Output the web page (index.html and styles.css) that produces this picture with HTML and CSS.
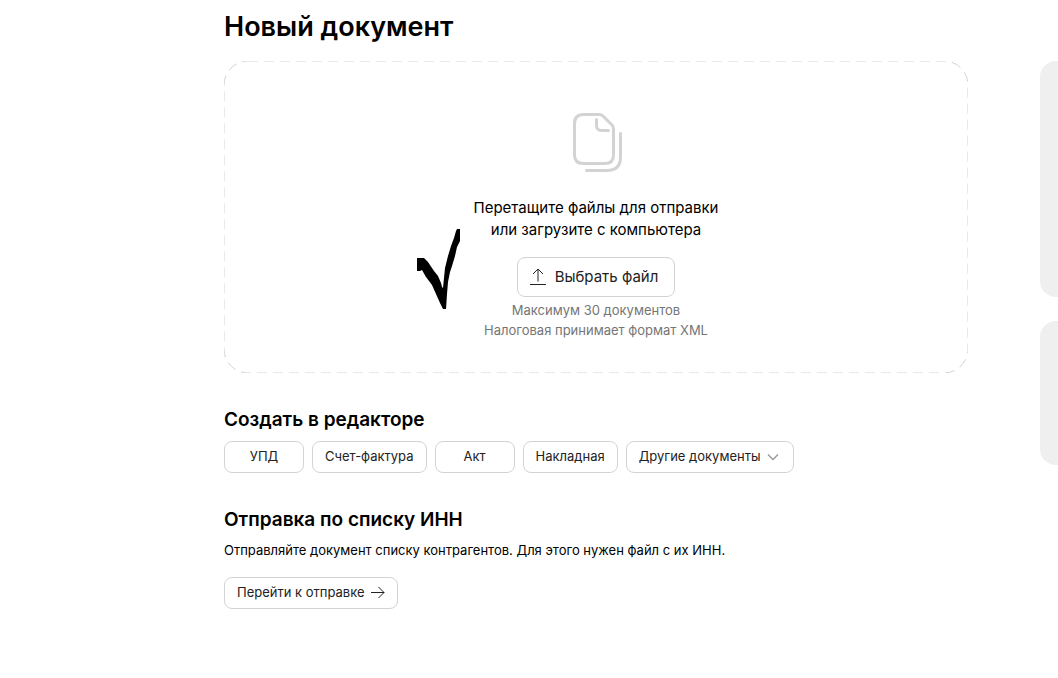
FILE: index.html
```html
<!DOCTYPE html>
<html lang="ru">
<head>
    <meta charset="UTF-8">
    <meta name="viewport" content="width=device-width, initial-scale=1.0">
    <title>Новый документ</title>
    <link rel="stylesheet" href="styles.css">
</head>
<body>

    <div class="page">
        <main class="content">
            <h1>Новый документ</h1>

            <!-- Drop area for files -->
            <section class="dropzone">
                <svg class="dropzone-border" aria-hidden="true">
                    <rect width="100%" height="100%" rx="24" />
                </svg>

                <svg class="files-icon" width="49" height="59" viewBox="0 0 49 59" aria-hidden="true">
                    <path d="M10.500 1.500H26Q28.500 1.500 30 3L39 12Q40.500 13.500 40.500 16V42Q40.500 50.500 32 50.500H10.500Q1.500 50.500 1.500 42V10.500Q1.500 1.500 10.500 1.500Z" />
                    <path d="M23.500 6.500V12.500Q23.500 17.500 28.500 17.500H35.500" />
                    <path d="M47.500 20.500V44Q47.500 57.500 34 57.500H13.500" />
                </svg>

                <p class="dropzone-text">Перетащите файлы для отправки<br>или загрузите с компьютера</p>

                <button type="button" class="btn btn-large">
                    <svg width="18" height="18" viewBox="0 0 18 18" aria-hidden="true">
                        <path d="M9 13.500V1.500M4 6L9 1L14 6M1 16.500H17" />
                    </svg>
                    Выбрать файл
                </button>

                <p class="hint">Максимум 30 документов<br>Налоговая принимает формат XML</p>

                <svg class="checkmark" width="44" height="80" viewBox="0 0 44 80" aria-hidden="true">
                    <path d="M0 29H7L11 33L17 42L21 47L24 54L25 58L26 59L27 49L28 39L31 27L34 17L37 9L39 2L40 0H43V12L40 18L38 27L35 37L33 43L31 53L30 65L29 80H26L23 74L19 65L15 56L9 48L5 41L3 42H0Z" />
                </svg>
            </section>

            <!-- Documents that can be made in the editor -->
            <section class="block">
                <h2>Создать в редакторе</h2>
                <div class="buttons">
                    <button type="button" class="btn">УПД</button>
                    <button type="button" class="btn">Счет-фактура</button>
                    <button type="button" class="btn">Акт</button>
                    <button type="button" class="btn">Накладная</button>
                    <div class="select">
                        <select class="btn" aria-label="Другие документы">
                            <option>Другие документы</option>
                        </select>
                        <svg width="12" height="8" viewBox="0 0 12 8" aria-hidden="true">
                            <path d="M1 1.500L6 6.500L11 1.500" />
                        </svg>
                    </div>
                </div>
            </section>

            <!-- Sending by a list of INN -->
            <section class="block">
                <h2>Отправка по списку ИНН</h2>
                <p class="description">Отправляйте документ списку контрагентов. Для этого нужен файл с их ИНН.</p>
                <a href="#" class="btn">
                    Перейти к отправке
                    <svg width="14" height="12" viewBox="0 0 14 12" aria-hidden="true">
                        <path d="M0 6.500H13M7.500 1L13 6.500L7.500 12" />
                    </svg>
                </a>
            </section>
        </main>

        <aside class="side">
            <div class="side-card side-card-tall"></div>
            <div class="side-card"></div>
        </aside>
    </div>

</body>
</html>
```

FILE: styles.css
```css
* {
    box-sizing: border-box;
}

body {
    font-family: Inter, "Liberation Sans", sans-serif;
    font-size: 13px;
    line-height: 20px;
    color: #000;
    background-color: #fff;
    margin: 0;
}

h1, h2, p {
    margin: 0;
}

.page {
    display: grid;
    grid-template-columns: minmax(0, 744px) minmax(18px, 1fr);
    column-gap: 72px;
    padding: 9px 0 40px 224px;
}

h1 {
    font-size: 27px;
    line-height: 36px;
    font-weight: 600;
    margin-bottom: 16px;
}

h2 {
    font-size: 19px;
    line-height: 30px;
    font-weight: 600;
    margin-bottom: 6px;
}

.dropzone {
    position: relative;
    display: flex;
    flex-direction: column;
    align-items: center;
    padding: 52px 24px 33px;
    text-align: center;
}

.dropzone-border {
    position: absolute;
    top: 0;
    left: 0;
    width: 100%;
    height: 100%;
}

.dropzone-border rect {
    fill: none;
    stroke: #d3d3d3;
    stroke-width: 1;
    stroke-dasharray: 10 6;
}

.files-icon {
    fill: none;
    stroke: #d3d3d3;
    stroke-width: 3;
    stroke-linecap: round;
    margin: 0 0 25px 3px;
}

.dropzone-text {
    font-size: 15px;
    line-height: 22px;
    margin-bottom: 16px;
}

.hint {
    color: #757575;
    margin-top: 3px;
}

/* hand-drawn tick to the left of the button */
.checkmark {
    position: absolute;
    top: 168px;
    left: calc(50% - 179px);
    fill: #000;
}

.btn {
    position: relative;
    display: inline-flex;
    align-items: center;
    justify-content: center;
    gap: 6px;
    min-width: 80px;
    height: 32px;
    padding: 0 12px 2px;
    font-family: inherit;
    font-size: 13px;
    line-height: 20px;
    color: #222;
    background-color: #fff;
    border: 1px solid #d3d3d3;
    border-radius: 8px;
    text-decoration: none;
    white-space: nowrap;
    cursor: pointer;
}

.btn:hover {
    border-color: #aaa;
}

.btn svg {
    fill: none;
    stroke: #222;
}

.btn-large {
    height: 40px;
    gap: 8px;
    padding: 0 16px 0 11px;
    font-size: 15px;
}

.block {
    margin-top: 32px;
}

.buttons {
    display: flex;
    flex-wrap: wrap;
    gap: 8px;
}

.select {
    position: relative;
}

.select select {
    appearance: none;
    padding-right: 32px;
}

.select svg {
    position: absolute;
    top: 12px;
    right: 15px;
    fill: none;
    stroke: #999;
    stroke-width: 1.4;
    pointer-events: none;
}

.description {
    line-height: 18px;
    margin-bottom: 18px;
}

.side {
    display: flex;
    flex-direction: column;
    gap: 24px;
    padding-top: 52px;
}

.side-card {
    height: 144px;
    background-color: #efefef;
    border-radius: 16px 0 0 16px;
}

.side-card-tall {
    height: 236px;
}
```
